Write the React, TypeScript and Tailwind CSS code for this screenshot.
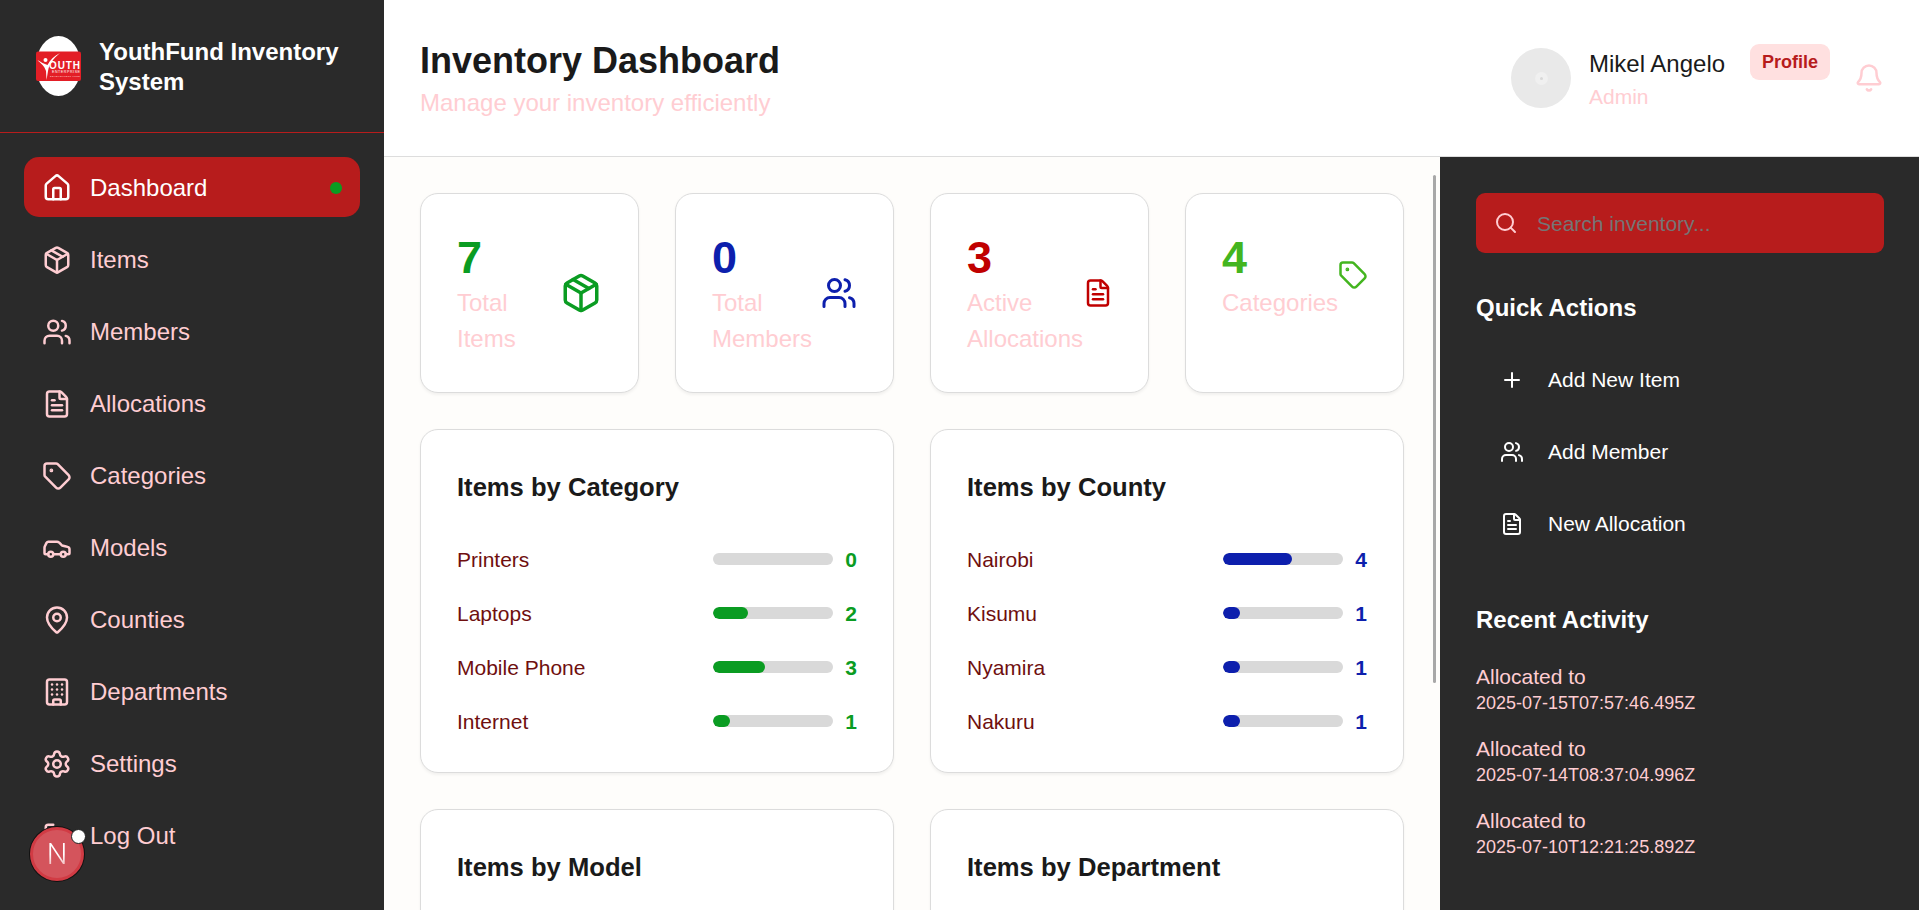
import {
  Bell,
  Building,
  Car,
  FileText,
  House,
  LogOut,
  MapPin,
  Package,
  Plus,
  Search,
  Settings,
  Tag,
  Users,
} from "lucide-react";

const navItems = [
  { label: "Dashboard", icon: House, active: true },
  { label: "Items", icon: Package },
  { label: "Members", icon: Users },
  { label: "Allocations", icon: FileText },
  { label: "Categories", icon: Tag },
  { label: "Models", icon: Car },
  { label: "Counties", icon: MapPin },
  { label: "Departments", icon: Building },
  { label: "Settings", icon: Settings },
  { label: "Log Out", icon: LogOut },
];

const stats = [
  { value: "7", label: "Total Items", icon: Package, size: 42, color: "text-[#0a9c22]" },
  { value: "0", label: "Total Members", icon: Users, size: 36, color: "text-[#0d1fad]" },
  { value: "3", label: "Active Allocations", icon: FileText, size: 30, color: "text-[#c00000]" },
  { value: "4", label: "Categories", icon: Tag, size: 30, color: "text-[#43b51f]" },
];

const categories = [
  { name: "Printers", count: 0 },
  { name: "Laptops", count: 2 },
  { name: "Mobile Phone", count: 3 },
  { name: "Internet", count: 1 },
];

const counties = [
  { name: "Nairobi", count: 4 },
  { name: "Kisumu", count: 1 },
  { name: "Nyamira", count: 1 },
  { name: "Nakuru", count: 1 },
];

const actions = [
  { label: "Add New Item", icon: Plus },
  { label: "Add Member", icon: Users },
  { label: "New Allocation", icon: FileText },
];

const activity = ["2025-07-15T07:57:46.495Z", "2025-07-14T08:37:04.996Z", "2025-07-10T12:21:25.892Z"];

function Logo() {
  return (
    <svg width="45" height="60" viewBox="0 0 45 60" className="shrink-0">
      <ellipse cx="22.5" cy="30" rx="22.5" ry="30" fill="#fff" />
      <rect x="0" y="15.5" width="45" height="29.5" rx="2" fill="#e31e26" />
      <circle cx="9.5" cy="24" r="2" fill="#fff" />
      <path d="M1.5 24 C5 28 8 29 10 35 L10.5 44 L12 35 C13 28 17 23 24 17 C18 20 14 24 11.5 29 C8 28 5 26 1.5 24 Z" fill="#fff" />
      <text x="13" y="33" fontSize="10" fontWeight="700" fill="#fff" fontFamily="Liberation Sans" textLength="31">
        OUTH
      </text>
      <text x="16" y="37" fontSize="3.6" fill="#fff" fontFamily="Liberation Sans" textLength="28">
        ENTERPRISE
      </text>
      <text x="14" y="40.5" fontSize="2.4" fill="#ffd5d5" fontFamily="Liberation Sans" textLength="30">
        DEVELOPMENT FUND
      </text>
    </svg>
  );
}

function ChartCard({
  title,
  rows,
  barColor,
  textColor,
}: {
  title: string;
  rows: { name: string; count: number }[];
  barColor: string;
  textColor: string;
}) {
  return (
    <div className="rounded-[18px] border border-[#dcdcdc] bg-white px-9 pt-9 pb-[35px] shadow-[0_1.5px_3px_rgba(0,0,0,0.05)]">
      <h2 className="mb-[35px] text-[25.6px] leading-[42px] font-bold text-[#1a1a1a]">{title}</h2>
      <div className="flex flex-col gap-[22.5px]">
        {rows.map((row) => (
          <div key={row.name} className="flex h-[31.5px] items-center justify-between leading-[31.5px]">
            <span className="block pt-[2px] text-[21px] text-[#6f0f0f]">{row.name}</span>
            <div className="flex items-center gap-3">
              <div className="h-3 w-[120px] overflow-hidden rounded-full bg-[#d9d9d9]">
                <div className={`h-full rounded-full ${barColor}`} style={{ width: `${(row.count / 7) * 100}%` }} />
              </div>
              <span className={`block pt-[2px] text-[21px] font-bold ${textColor}`}>{row.count}</span>
            </div>
          </div>
        ))}
      </div>
    </div>
  );
}

export default function App() {
  return (
    <div className="flex h-screen overflow-hidden bg-white font-['Liberation_Sans',Arial,sans-serif]">
      <aside className="flex w-[384px] shrink-0 flex-col bg-[#2a2a2a]">
        <div className="flex h-[133px] shrink-0 items-start gap-[18px] border-b border-[#b71c1c] pt-9 pl-9">
          <Logo />
          <h1 className="w-[249px] pt-px text-2xl leading-[30px] font-bold text-white">YouthFund Inventory System</h1>
        </div>
        <nav className="flex flex-col gap-3 px-6 pt-6">
          {navItems.map((item) => (
            <div
              key={item.label}
              className={`box-border flex h-[60px] items-center gap-[18px] rounded-[15px] px-[18px] pt-[2px] text-2xl ${
                item.active ? "bg-[#b71c1c] text-white" : "text-[#ffcdd2]"
              }`}
            >
              <item.icon size={30} strokeWidth={2} className="shrink-0" />
              <span>{item.label}</span>
              {item.active && <span className="ml-auto size-3 rounded-full bg-[#0a9c22]" />}
            </div>
          ))}
        </nav>
      </aside>

      <div className="flex min-w-0 flex-1 flex-col">
        <header className="box-border flex h-[157px] shrink-0 items-center justify-between border-b-[1.5px] border-[#dddddd] bg-white pr-[35px] pl-9">
          <div className="self-start pt-[37px]">
            <div className="text-4xl leading-[48px] font-bold text-[#1a1a1a]">Inventory Dashboard</div>
            <div className="text-2xl leading-9 text-[#ffcdd2]">Manage your inventory efficiently</div>
          </div>
          <div className="flex items-center gap-6">
            <div className="flex items-center gap-[18px]">
              <div className="flex size-[60px] items-center justify-center rounded-full bg-[#e9e9e9]">
                <div className="flex size-[13px] items-center justify-center rounded-full bg-[#f0f0f0]">
                  <div className="size-[3px] rounded-full bg-[#d8d8d8]" />
                </div>
              </div>
              <div className="w-[137px]">
                <div className="mt-[2px] -mb-px text-2xl leading-9 text-[#1a1a1a]">Mikel Angelo</div>
                <div className="text-[21px] leading-[31.5px] text-[#ffcdd2]">Admin</div>
              </div>
            </div>
            <div className="flex h-9 w-20 items-center justify-center self-start rounded-[9px] bg-[#ffe0e0] text-lg font-bold text-[#b71c1c]">
              Profile
            </div>
            <Bell size={30} className="text-[#ffcdd2]" />
          </div>
        </header>

        <div className="flex min-h-0 flex-1">
          <main className="relative min-w-0 flex-1 overflow-hidden bg-[#fefdfb] pt-9 pr-9 pl-9">
            <div className="grid grid-cols-4 gap-9">
              {stats.map((stat) => (
                <div
                  key={stat.value}
                  className="rounded-[18px] border border-[#dcdcdc] bg-white p-9 shadow-[0_1.5px_3px_rgba(0,0,0,0.05)]"
                >
                  <div className="flex items-center justify-between">
                    <div className="mt-px -mb-px">
                      <div className={`text-[45px] leading-[54px] font-bold ${stat.color}`}>{stat.value}</div>
                      <div className="text-2xl leading-9 text-[#ffcdd2]">{stat.label}</div>
                    </div>
                    <stat.icon size={stat.size} className={`shrink-0 ${stat.color}`} />
                  </div>
                </div>
              ))}
            </div>

            <div className="mt-9 grid grid-cols-2 gap-9">
              <ChartCard title="Items by Category" rows={categories} barColor="bg-[#0a9c22]" textColor="text-[#0a9c22]" />
              <ChartCard title="Items by County" rows={counties} barColor="bg-[#0d1fad]" textColor="text-[#0d1fad]" />
              <ChartCard title="Items by Model" rows={[]} barColor="bg-[#0a9c22]" textColor="text-[#0a9c22]" />
              <ChartCard title="Items by Department" rows={[]} barColor="bg-[#0d1fad]" textColor="text-[#0d1fad]" />
            </div>

            <div className="absolute top-[18px] right-1 h-[508px] w-[3px] rounded-full bg-[#a8a8a8]" />
          </main>

          <aside className="w-[479px] shrink-0 bg-[#2a2a2a] px-9 pt-9">
            <div className="flex h-[60px] w-[408px] items-center gap-[19px] rounded-[9px] bg-[#b71c1c] px-[18px]">
              <Search size={24} className="shrink-0 text-[#ffcdd2]" />
              <input
                placeholder="Search inventory..."
                className="w-full bg-transparent pt-[2px] text-[21px] outline-none placeholder:text-[#757575]"
              />
            </div>

            <h3 className="mt-[37px] mb-[23px] text-2xl leading-9 font-bold text-white">Quick Actions</h3>
            <div className="flex flex-col gap-3">
              {actions.map((action) => (
                <div key={action.label} className="box-border flex h-[60px] items-center gap-6 px-6 pt-[2px] text-[21px] text-white">
                  <action.icon size={24} className="shrink-0" />
                  <span>{action.label}</span>
                </div>
              ))}
            </div>

            <h3 className="mt-[49px] mb-[27px] text-2xl leading-9 font-bold text-white">Recent Activity</h3>
            <div className="flex flex-col gap-5 text-[#ffcdd2]">
              {activity.map((date) => (
                <div key={date}>
                  <div className="text-[21px] leading-6">Allocated to</div>
                  <div className="mt-px text-lg leading-[27px]">{date}</div>
                </div>
              ))}
            </div>
          </aside>
        </div>
      </div>

      {/* dev tools badge sitting over the sidebar */}
      <div className="fixed top-[827px] left-[30px] flex size-[54px] items-center justify-center rounded-full border-[3px] border-[#d13b44] bg-[#d4545c] shadow-[0_0_0_1px_#111]">
        <span className="bg-gradient-to-b from-white from-50% to-[#e9a0a5] bg-clip-text font-['Roboto'] text-[29px] leading-none font-light text-transparent">
          N
        </span>
        <span className="absolute -top-[1px] -right-[4.5px] size-[15px] rounded-full border-[1.5px] border-[#222] bg-white" />
      </div>
    </div>
  );
}
